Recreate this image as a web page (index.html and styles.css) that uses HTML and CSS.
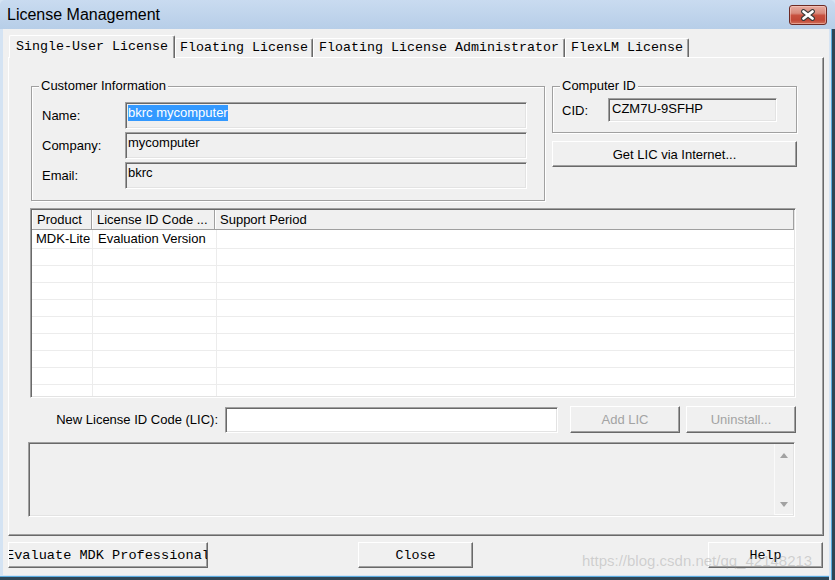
FILE: index.html
```html
<!DOCTYPE html>
<html>
<head>
<meta charset="utf-8">
<title>License Management</title>
<link rel="stylesheet" href="styles.css">
</head>
<body>
<div class="window">
  <div class="titlebar">
    <span class="title">License Management</span>
    <div class="close-btn">
      <svg width="16" height="12" viewBox="0 0 16 12">
        <path d="M3.5 2.5 L12.5 9.5 M12.5 2.5 L3.5 9.5" stroke="#3b3b3b" stroke-width="4.8" stroke-linecap="round" fill="none"/>
        <path d="M3.5 2.5 L12.5 9.5 M12.5 2.5 L3.5 9.5" stroke="#ffffff" stroke-width="2.8" stroke-linecap="round" fill="none"/>
      </svg>
    </div>
  </div>
  <div class="frame-l"></div>
  <div class="client">
    <div class="tabs">
      <div class="tab active">Single-User License</div>
      <div class="tab narrow">Floating License</div>
      <div class="tab">Floating License Administrator</div>
      <div class="tab">FlexLM License</div>
    </div>
    <div class="panel">
      <div class="top-row">
        <div class="group customer">
          <div class="legend">Customer Information</div>
          <div class="form-grid">
            <span class="lbl">Name:</span>
            <div class="field"><span class="sel">bkrc mycomputer</span></div>
            <span class="lbl">Company:</span>
            <div class="field">mycomputer</div>
            <span class="lbl">Email:</span>
            <div class="field">bkrc</div>
          </div>
        </div>
        <div class="right-col">
          <div class="group cid-group">
            <div class="legend">Computer ID</div>
            <div class="cid-row">
              <span class="cid-label">CID:</span>
              <div class="field cid">CZM7U-9SFHP</div>
            </div>
          </div>
          <div class="btn getlic">Get LIC via Internet...</div>
        </div>
      </div>

      <div class="listview">
        <div class="lv-header">
          <div class="hcell h1">Product</div>
          <div class="hcell h2">License ID Code ...</div>
          <div class="hcell h3">Support Period</div>
        </div>
        <div class="lv-body">
          <div class="lv-row first"><div class="cell c1">MDK-Lite</div><div class="cell c2">Evaluation Version</div><div class="cell c3"></div></div>
          <div class="lv-row"><div class="cell c1"></div><div class="cell c2"></div><div class="cell c3"></div></div>
          <div class="lv-row"><div class="cell c1"></div><div class="cell c2"></div><div class="cell c3"></div></div>
          <div class="lv-row"><div class="cell c1"></div><div class="cell c2"></div><div class="cell c3"></div></div>
          <div class="lv-row"><div class="cell c1"></div><div class="cell c2"></div><div class="cell c3"></div></div>
          <div class="lv-row"><div class="cell c1"></div><div class="cell c2"></div><div class="cell c3"></div></div>
          <div class="lv-row"><div class="cell c1"></div><div class="cell c2"></div><div class="cell c3"></div></div>
          <div class="lv-row"><div class="cell c1"></div><div class="cell c2"></div><div class="cell c3"></div></div>
          <div class="lv-row"><div class="cell c1"></div><div class="cell c2"></div><div class="cell c3"></div></div>
          <div class="lv-row"><div class="cell c1"></div><div class="cell c2"></div><div class="cell c3"></div></div>
        </div>
      </div>

      <div class="lic-row">
        <span class="lic-label">New License ID Code (LIC):</span>
        <div class="field input"></div>
        <div class="btn disabled add">Add LIC</div>
        <div class="btn disabled uninstall">Uninstall...</div>
      </div>

      <div class="textarea">
        <div class="scrollbar">
          <span class="arrow up"></span>
          <span class="arrow down"></span>
        </div>
      </div>
    </div>

    <div class="bottom-row">
      <div class="btn mono eval"><span>Evaluate MDK Professional</span></div>
      <div class="btn mono close">Close</div>
      <div class="btn mono help">Help</div>
    </div>
  </div>
  <div class="frame-r"></div>
  <div class="frame-b"></div>
  <div class="watermark">https://blog.csdn.net/qq_42148213</div>
</div>
</body>
</html>
```

FILE: styles.css
```css
html, body {
  margin: 0;
  padding: 0;
}

body {
  width: 835px;
  height: 580px;
  overflow: hidden;
  font-family: "Liberation Sans", Arial, sans-serif;
  font-size: 13px;
  color: #000;
  background: #d4e3f3;
}

.window {
  position: relative;
  width: 835px;
  height: 580px;
  display: grid;
  grid-template-columns: 3px 826px 6px;
  grid-template-rows: 29px 546px 5px;
  background: #d4e3f3;
}

/* ---------- title bar ---------- */
.titlebar {
  grid-column: 1 / 4;
  grid-row: 1;
  display: flex;
  align-items: center;
  justify-content: space-between;
  padding: 0 8px 0 7px;
  background: linear-gradient(#c9dbf0, #b7cee8);
  border-radius: 5px 5px 0 0;
}

.title {
  font-size: 16px;
  padding-top: 1px;
  color: #000;
}

.close-btn {
  width: 38px;
  height: 20px;
  box-sizing: border-box;
  border: 1px solid #6d2a24;
  border-radius: 3px;
  background: linear-gradient(#e7aba0 0%, #d88a7c 40%, #c7503f 52%, #c14736 78%, #d2725c 100%);
  box-shadow: inset 0 0 0 1px rgba(255, 220, 210, 0.45);
  display: flex;
  align-items: center;
  justify-content: center;
}

/* ---------- frame ---------- */
.frame-l {
  grid-column: 1;
  grid-row: 2 / 4;
  background: #d4e3f3;
}

.frame-r {
  grid-column: 3;
  grid-row: 2 / 4;
  background: linear-gradient(to right, #d6e4f3 0 2px, #5aabdf 2px 3px, #2f4656 3px);
}

.frame-b {
  grid-column: 1 / 3;
  grid-row: 3;
  background: linear-gradient(#d6e4f3 0 1px, #5aabdf 1px 2px, #2f4656 2px);
}

/* ---------- client ---------- */
.client {
  grid-column: 2;
  grid-row: 2;
  background: #f0f0f0;
  padding: 0 5px;
  display: flex;
  flex-direction: column;
}

/* ---------- tabs ---------- */
.tabs {
  display: flex;
  align-items: flex-end;
  height: 22px;
  margin-top: 6px;
  padding-left: 1px;
  font-family: "Liberation Mono", "Courier New", monospace;
  font-size: 13.333px;
}

.tab {
  box-sizing: border-box;
  height: 19px;
  line-height: 18px;
  padding: 0 5px;
  background: #f0f0f0;
  border-top: 1px solid #fff;
  border-left: 1px solid #fff;
  border-right: 1px solid #696969;
  box-shadow: inset -1px 0 0 #a0a0a0;
  border-radius: 2px 2px 0 0;
  white-space: nowrap;
}

.tab.narrow {
  padding: 0 4px;
}

.tab.active {
  position: relative;
  z-index: 1;
  height: 23px;
  margin-bottom: -1px;
  line-height: 21px;
  padding: 0 6px;
}

/* ---------- panel ---------- */
.panel {
  box-sizing: border-box;
  height: 479px;
  border-style: solid;
  border-width: 1px;
  border-color: #fff #696969 #696969 #fff;
  box-shadow: inset -1px -1px 0 #a0a0a0;
  padding-top: 28px;
  display: flex;
  flex-direction: column;
  align-items: flex-start;
}

.top-row {
  display: flex;
  align-items: flex-start;
  margin-left: 22px;
}

.group {
  box-sizing: border-box;
  border: 1px solid #a0a0a0;
  box-shadow: inset 1px 1px 0 #fff, 1px 1px 0 #fff;
}

.legend {
  width: max-content;
  margin-top: -9px;
  padding: 0 2px;
  line-height: 15px;
  background: #f0f0f0;
}

.customer {
  width: 514px;
  padding: 0 17px 11px 10px;
}

.customer .legend {
  margin-left: -3px;
}

.form-grid {
  display: grid;
  grid-template-columns: 83px 1fr;
  grid-auto-rows: 27px;
  row-gap: 3px;
  align-items: center;
  margin-top: 9px;
}

.field {
  box-sizing: border-box;
  height: 27px;
  padding: 2px 2px;
  line-height: 16px;
  white-space: nowrap;
  overflow: hidden;
  border-style: solid;
  border-width: 1px;
  border-color: #a0a0a0 #fff #fff #a0a0a0;
  box-shadow: inset 1px 1px 0 #696969, inset -1px -1px 0 #e3e3e3;
  background: #f0f0f0;
}

.sel {
  display: inline-block;
  line-height: 16px;
  background: #3399ff;
  color: #fff;
}

.right-col {
  width: 245px;
  margin-left: 7px;
  display: flex;
  flex-direction: column;
}

.cid-group {
  padding: 0 19px 10px 9px;
}

.cid-group .legend {
  margin-left: -2px;
}

.cid-row {
  display: flex;
  align-items: center;
  margin-top: 5px;
}

.cid-label {
  width: 46px;
  flex-shrink: 0;
}

.field.cid {
  flex: 1;
  height: 24px;
  padding: 2px 3px;
}

/* ---------- buttons ---------- */
.btn {
  box-sizing: border-box;
  display: flex;
  align-items: center;
  justify-content: center;
  white-space: nowrap;
  overflow: hidden;
  background: #f0f0f0;
  border-style: solid;
  border-width: 1px;
  border-color: #fff #696969 #696969 #fff;
  box-shadow: inset -1px -1px 0 #a0a0a0;
}

.btn.disabled {
  color: #a3a3a3;
}

.getlic {
  height: 26px;
  margin-top: 8px;
}

/* ---------- list view ---------- */
.listview {
  box-sizing: border-box;
  width: 766px;
  height: 190px;
  margin: 7px 0 0 21px;
  padding: 1px;
  background: #fff;
  overflow: hidden;
  display: flex;
  flex-direction: column;
  border-style: solid;
  border-width: 1px;
  border-color: #a0a0a0 #fff #fff #a0a0a0;
  box-shadow: inset 1px 1px 0 #696969, inset -1px -1px 0 #e3e3e3;
}

.lv-header {
  display: flex;
  flex-shrink: 0;
  box-sizing: border-box;
  height: 20px;
  background: #f0f0f0;
  border-bottom: 1px solid #a0a0a0;
}

.hcell {
  box-sizing: border-box;
  line-height: 19px;
  padding-left: 5px;
  white-space: nowrap;
  border-right: 1px solid #a0a0a0;
  box-shadow: inset 1px 0 0 #fff;
}

.h1 {
  width: 60px;
}

.h2 {
  width: 123px;
}

.h3 {
  flex: 1;
}

.lv-body {
  flex: 1;
  overflow: hidden;
}

.lv-row {
  display: flex;
  box-sizing: border-box;
  height: 17px;
  border-bottom: 1px solid #ececec;
}

.lv-row.first {
  height: 19px;
}

.cell {
  box-sizing: border-box;
  line-height: 16px;
  white-space: nowrap;
  border-right: 1px solid #ececec;
}

.lv-row.first .cell {
  line-height: 18px;
}

.c1 {
  width: 61px;
  padding-left: 4px;
}

.c2 {
  width: 124px;
  padding-left: 5px;
}

.c3 {
  flex: 1;
  border-right: none;
}

/* ---------- LIC row ---------- */
.lic-row {
  display: flex;
  align-items: center;
  height: 27px;
  margin: 8px 0 0 21px;
}

.lic-label {
  width: 188px;
  text-align: right;
}

.field.input {
  width: 333px;
  height: 26px;
  margin-left: 7px;
  background: #fff;
}

.add {
  width: 110px;
  height: 27px;
  margin-left: 12px;
}

.uninstall {
  width: 110px;
  height: 27px;
  margin-left: 6px;
}

/* ---------- message area ---------- */
.textarea {
  box-sizing: border-box;
  width: 767px;
  height: 75px;
  margin: 9px 0 0 19px;
  padding: 1px;
  display: flex;
  justify-content: flex-end;
  border-style: solid;
  border-width: 1px;
  border-color: #a0a0a0 #fff #fff #a0a0a0;
  box-shadow: inset 1px 1px 0 #696969, inset -1px -1px 0 #e3e3e3;
  background: #f0f0f0;
}

.scrollbar {
  box-sizing: border-box;
  width: 19px;
  padding: 9px 0 7px;
  display: flex;
  flex-direction: column;
  justify-content: space-between;
  align-items: center;
  background: #f0f0f0;
  border-left: 1px solid #fafafa;
  border-bottom: 1px solid #fcfcfc;
}

.arrow {
  width: 0;
  height: 0;
  border-left: 4.5px solid transparent;
  border-right: 4.5px solid transparent;
}

.arrow.up {
  border-bottom: 5px solid #a2a2a2;
}

.arrow.down {
  border-top: 5px solid #a2a2a2;
}

/* ---------- bottom buttons ---------- */
.bottom-row {
  display: flex;
  width: 815px;
  margin-top: 6px;
}

.mono {
  font-family: "Liberation Mono", "Courier New", monospace;
  font-size: 13.333px;
  height: 26px;
}

.eval {
  width: 200px;
  font-size: 13.6px;
}

.close {
  width: 115px;
  margin-left: 150px;
}

.help {
  width: 115px;
  margin-left: auto;
}

/* ---------- watermark overlay ---------- */
.watermark {
  position: absolute;
  left: 582px;
  top: 552px;
  font-size: 15px;
  line-height: 18px;
  color: rgba(150, 150, 150, 0.38);
  white-space: nowrap;
  pointer-events: none;
}
```
